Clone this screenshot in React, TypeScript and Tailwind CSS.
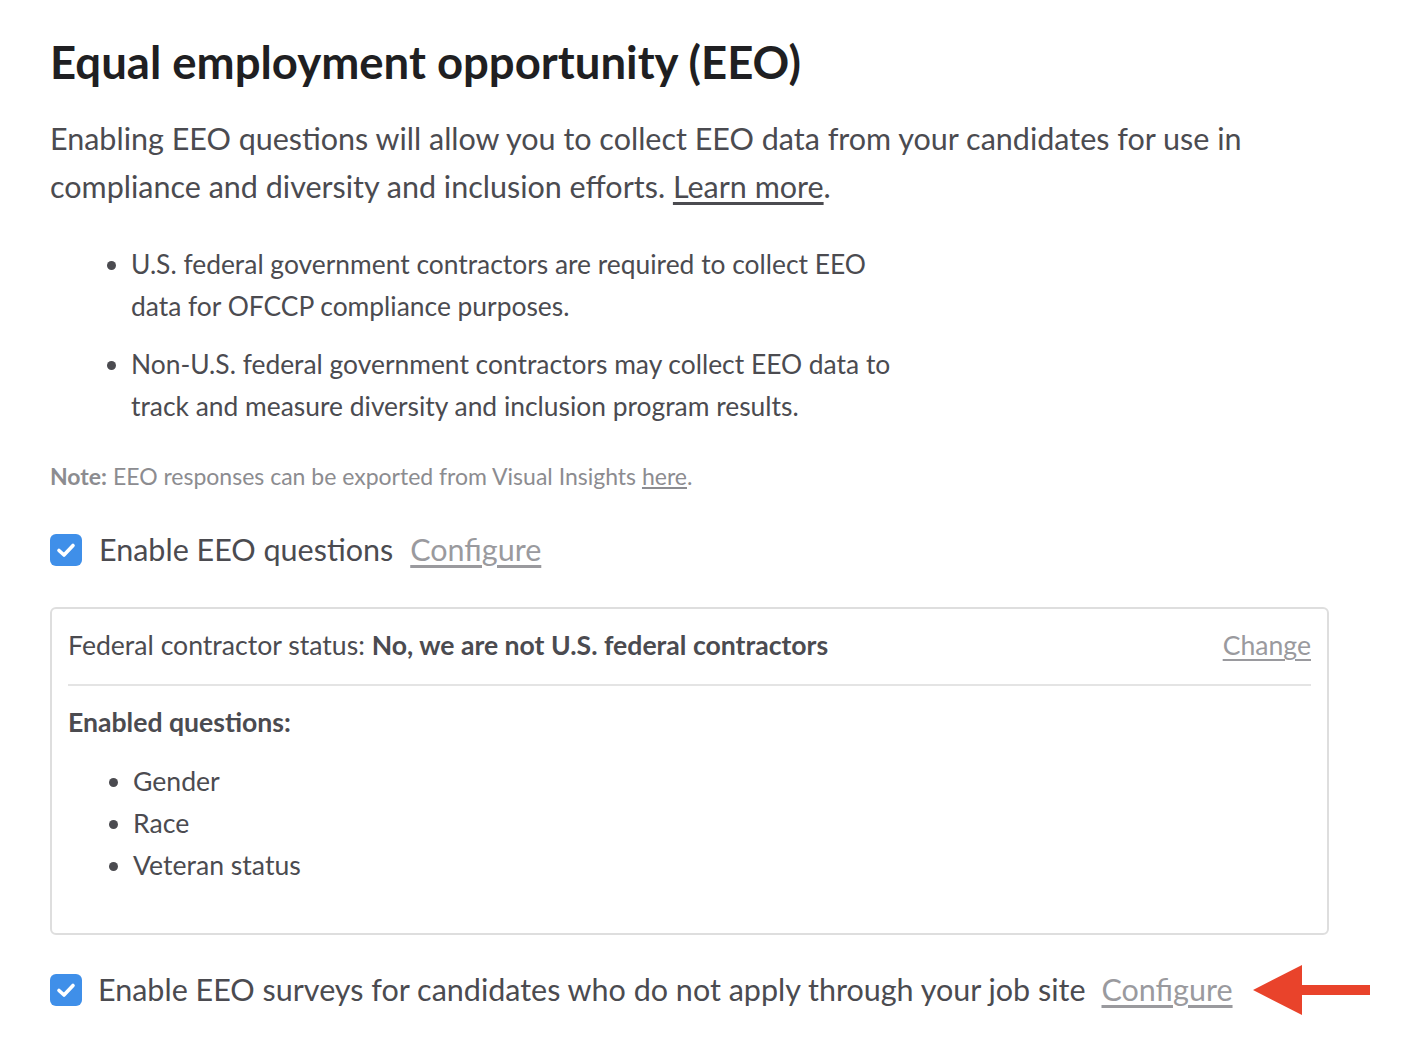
import React from 'react'

const font = "font-['Lato','Noto_Sans',sans-serif]"

function CheckBox() {
  return (
    <span className="flex h-8 w-8 shrink-0 items-center justify-center rounded-[6px] bg-[#3f8fe9]">
      <svg width="20" height="16" viewBox="0 0 20 16" fill="none">
        <path d="M3 8.5 L8 13 L17 3.5" stroke="white" strokeWidth="3.6" strokeLinecap="round" strokeLinejoin="round" />
      </svg>
    </span>
  )
}

function Arrow() {
  return (
    <svg width="118" height="52" viewBox="0 0 118 52" className="shrink-0">
      <polygon points="0,26 49,1 49,21 117,21 117,31 49,31 49,51" fill="#e9432b" />
    </svg>
  )
}

export default function App() {
  return (
    <div className={`min-h-screen bg-white px-[50px] pt-[35px] text-[#4b4b50] ${font}`}>
      <h1 className="text-[45.5px] font-bold leading-[54px] text-[#1f1f22]">
        Equal employment opportunity (EEO)
      </h1>

      <p className="mt-[25px] text-[30.5px] leading-[48px]">
        Enabling EEO questions will allow you to collect EEO data from your candidates for use in
        compliance and diversity and inclusion efforts.{' '}
        <a className="underline underline-offset-4">Learn more</a>.
      </p>

      <ul className="mt-[33px] max-w-[846px] list-disc space-y-4 pl-[81px] text-[26.4px] leading-[42px]">
        <li>U.S. federal government contractors are required to collect EEO data for OFCCP compliance purposes.</li>
        <li>Non-U.S. federal government contractors may collect EEO data to track and measure diversity and inclusion program results.</li>
      </ul>

      <p className="mt-[34px] text-[23px] leading-[30px] text-[#8c8c90]">
        <span className="font-bold">Note:</span> EEO responses can be exported from Visual Insights{' '}
        <a className="underline underline-offset-2">here</a>.
      </p>

      <div className="mt-[39px] flex h-10 items-center gap-[17px]">
        <CheckBox />
        <span className="text-[30.5px]">Enable EEO questions</span>
        <a className="text-[30.5px] text-[#9a9a9e] underline underline-offset-4">Configure</a>
      </div>

      <div className="mt-[37px] w-[1279px] rounded-[6px] border-2 border-[#dedede] px-[16px] pt-[19px] pb-[47px] text-[26.6px]">
        <div className="flex h-9 items-center justify-between">
          <span>
            Federal contractor status: <span className="font-bold">No, we are not U.S. federal contractors</span>
          </span>
          <a className="text-[#9a9a9e] underline underline-offset-4">Change</a>
        </div>
        <div className="mt-[20px] h-[2px] bg-[#e4e4e4]" />
        <div className="mt-[18px] h-9 leading-9 font-bold">Enabled questions:</div>
        <ul className="mt-[20px] list-disc pl-[65px] leading-[42px]">
          <li>Gender</li>
          <li>Race</li>
          <li>Veteran status</li>
        </ul>
      </div>

      <div className="mt-[35px] flex h-10 items-center gap-[16px]">
        <CheckBox />
        <span className="text-[30.5px]">Enable EEO surveys for candidates who do not apply through your job site</span>
        <a className="text-[30.5px] text-[#9a9a9e] underline underline-offset-4">Configure</a>
        <span className="ml-[4px]"><Arrow /></span>
      </div>
    </div>
  )
}
